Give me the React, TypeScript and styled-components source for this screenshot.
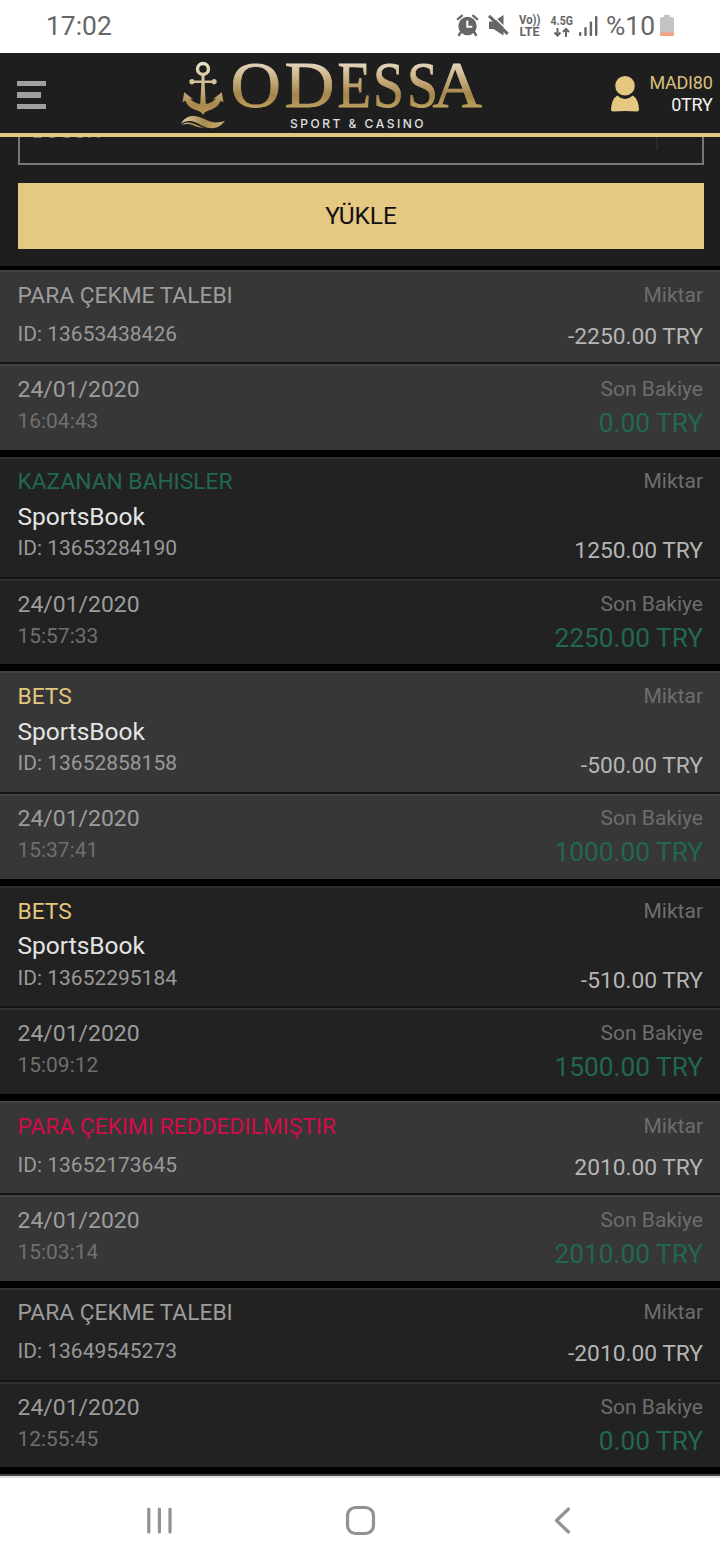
import React from "react";
import styled, { createGlobalStyle } from "styled-components";

const GlobalStyle = createGlobalStyle`
  * { box-sizing: border-box; }
  body { margin: 0; background: #000; font-family: Roboto, "Liberation Sans", sans-serif; }
`;

const Screen = styled.div`
  width: 720px;
  height: 1560px;
  display: flex;
  flex-direction: column;
  overflow: hidden;
  background: #000;
`;

const StatusBar = styled.div`
  height: 53px;
  flex: none;
  display: flex;
  justify-content: space-between;
  align-items: center;
  padding: 0 44px 0 46px;
  background: #fff;
  color: #666;
`;

const Clock = styled.span`
  margin-bottom: 2px;
  font-size: 26.4px;
  line-height: 32px;
`;

const StatusIcons = styled.svg`
  display: block;
  width: 222px;
  height: 53px;
`;

const Header = styled.header`
  position: relative;
  z-index: 1;
  height: 84px;
  flex: none;
  display: flex;
  align-items: flex-start;
  padding: 0 7.5px 0 17px;
  background: #1e1e1e;
  border-bottom: 4px solid #e2c77f;
`;

const MenuButton = styled.button`
  display: flex;
  flex-direction: column;
  gap: 6px;
  width: 29px;
  margin: 28px 0 0;
  padding: 0;
  border: 0;
  background: none;
`;

const MenuBar = styled.span<{ $short?: boolean }>`
  width: ${(p) => (p.$short ? 24 : 29)}px;
  height: 5.4px;
  background: #a0a0a0;
`;

const Logo = styled.svg`
  display: block;
  width: 308px;
  height: 80px;
  margin-left: 132px;
  overflow: visible;
`;

const Account = styled.div`
  display: flex;
  gap: 9px;
  margin-left: auto;
  padding-top: 19px;
`;

const Avatar = styled.svg`
  display: block;
  width: 30px;
  height: 38px;
  margin-top: 3px;
`;

const AccountText = styled.div`
  text-align: right;
  font-size: 18px;
  line-height: 22px;
  letter-spacing: -0.25px;
`;

const UserName = styled.div`
  color: #d9bf7c;
`;

const Credit = styled.div`
  color: #f2f2f2;
`;

const FilterPanel = styled.div`
  height: 129px;
  flex: none;
  padding: 0 16px 0 18px;
  background: #1e1e1e;
`;

const SelectBox = styled.div`
  height: 66px;
  margin-top: -38px;
  display: flex;
  align-items: center;
  justify-content: space-between;
  padding: 0 44px 3px 12px;
  border: 2px solid #777;
  color: #777;
  font-size: 21px;
`;

const SelectDivider = styled.span`
  width: 2px;
  height: 38px;
  background: #2b2b2b;
`;

const LoadButton = styled.button`
  display: block;
  width: 686px;
  height: 66px;
  margin-top: 18px;
  padding: 0;
  border: 0;
  background: #e5c881;
  color: #111;
  font: 24.4px/66px Roboto, sans-serif;
`;

const RecordList = styled.div`
  flex: none;
  display: flex;
  flex-direction: column;
  gap: 7px;
  padding-top: 4px;
`;

const Record = styled.article`
  display: flex;
  flex-direction: column;
`;

const Section = styled.div<{ $light: boolean; $height: number }>`
  height: ${(p) => p.$height}px;
  display: flex;
  justify-content: space-between;
  padding: 10px 17px 0 17.5px;
  background: ${(p) => (p.$light ? "#373737" : "#222")};
  border-top: 2px solid ${(p) => (p.$light ? "#434343" : "#2f2f2f")};
`;

const Divider = styled.div`
  height: 2px;
  background: #151515;
`;

const RightColumn = styled.div`
  display: flex;
  flex-direction: column;
  align-items: flex-end;
`;

const tones = { muted: "#9c9c9c", green: "#22684f", gold: "#e2c67e", red: "#d30c49" };
type Tone = keyof typeof tones;

const Title = styled.div<{ $tone: Tone }>`
  padding-top: 0.6px;
  margin-bottom: -0.6px;
  color: ${(p) => tones[p.$tone]};
  font-size: 22.75px;
  line-height: 26px;
`;

const Product = styled.div`
  margin: 6.3px 0 -10.5px;
  color: #e4e4e4;
  font-size: 24.5px;
  line-height: 32px;
`;

const RecordId = styled.div`
  margin-top: 12.8px;
  color: #999;
  font-size: 20.99px;
  line-height: 26px;
`;

const DateText = styled.div`
  padding-top: 0.6px;
  color: #9c9c9c;
  font-size: 22.95px;
  line-height: 26px;
`;

const TimeText = styled.div`
  margin-top: 5.2px;
  color: #6f6f6f;
  font-size: 20.95px;
  line-height: 26px;
`;

const Label = styled.div`
  margin-top: -0.22px;
  color: #6d6d6d;
  font-size: 21px;
  line-height: 26px;
`;

const Amount = styled.div`
  margin: auto 0 12.55px;
  color: #b5b5b5;
  font-size: 22.75px;
  line-height: 26px;
`;

const Balance = styled.div`
  margin-top: 6.02px;
  color: #22684f;
  font-size: 26.25px;
  line-height: 30px;
`;

const NextRecordEdge = styled.div`
  height: 2px;
  background: #434343;
`;

const NavBar = styled.nav`
  flex: 1;
  border-top: 2px solid #dedede;
  background: #fff;
  display: flex;
  justify-content: space-between;
  align-items: flex-start;
  padding: 22px 140px 0;
`;

const NavIcon = styled.svg`
  display: block;
  width: 40px;
  height: 40px;
  fill: none;
  stroke: #929292;
  stroke-width: 3.2;
  stroke-linecap: round;
  stroke-linejoin: round;
`;

type RecordData = {
  title: string;
  tone: Tone;
  product?: string;
  id: string;
  amount: string;
  date: string;
  time: string;
  balance: string;
  footHeight: number;
};

const records: RecordData[] = [
  { title: "PARA ÇEKME TALEBI", tone: "muted", id: "13653438426", amount: "-2250.00", date: "24/01/2020", time: "16:04:43", balance: "0.00", footHeight: 85.27 },
  { title: "KAZANAN BAHISLER", tone: "green", product: "SportsBook", id: "13653284190", amount: "1250.00", date: "24/01/2020", time: "15:57:33", balance: "2250.00", footHeight: 85.37 },
  { title: "BETS", tone: "gold", product: "SportsBook", id: "13652858158", amount: "-500.00", date: "24/01/2020", time: "15:37:41", balance: "1000.00", footHeight: 85.37 },
  { title: "BETS", tone: "gold", product: "SportsBook", id: "13652295184", amount: "-510.00", date: "24/01/2020", time: "15:09:12", balance: "1500.00", footHeight: 85.7 },
  { title: "PARA ÇEKIMI REDDEDILMIŞTIR", tone: "red", id: "13652173645", amount: "2010.00", date: "24/01/2020", time: "15:03:14", balance: "2010.00", footHeight: 85.27 },
  { title: "PARA ÇEKME TALEBI", tone: "muted", id: "13649545273", amount: "-2010.00", date: "24/01/2020", time: "12:55:45", balance: "0.00", footHeight: 84.93 },
];

const letters: [string, number, number][] = [
  ["O", 230.5, 50.5],
  ["D", 284.5, 50],
  ["E", 337.5, 33.5],
  ["S", 373, 31],
  ["S", 407, 31],
  ["A", 432.5, 49.5],
];

function OdessaLogo() {
  return (
    <Logo viewBox="178 53 308 80">
      <defs>
        <linearGradient id="gold" gradientUnits="userSpaceOnUse" x1="0" y1="62" x2="0" y2="108">
          <stop offset="0" stopColor="#e8d9c4" />
          <stop offset="0.35" stopColor="#cbb183" />
          <stop offset="0.72" stopColor="#a5854a" />
          <stop offset="1" stopColor="#bda060" />
        </linearGradient>
        <linearGradient id="anchor" gradientUnits="userSpaceOnUse" x1="0" y1="62" x2="0" y2="115">
          <stop offset="0" stopColor="#eadfca" />
          <stop offset="0.4" stopColor="#d3bc93" />
          <stop offset="0.8" stopColor="#a98a4e" />
          <stop offset="1" stopColor="#b5964f" />
        </linearGradient>
        <linearGradient id="wave" x1="0" y1="0" x2="1" y2="0">
          <stop offset="0" stopColor="#e0cfae" />
          <stop offset="0.5" stopColor="#a98b50" />
          <stop offset="1" stopColor="#c9ad72" />
        </linearGradient>
      </defs>
      <g fill="url(#anchor)">
        <path fillRule="evenodd" d="M203 61.8a7.2 7.2 0 1 0 0 14.4a7.2 7.2 0 1 0 0-14.4ZM203 65.2a3.8 3.8 0 1 1 0 7.6a3.8 3.8 0 1 1 0-7.6Z" />
        <path d="M201.5 75.5H204.5V80.4H211.7A2.7 2.7 0 1 1 211.7 83H204.6L205.8 104C210.5 103 214.2 101 216 98.4L212.5 99.5L221.8 92.2L223.5 102.3L220.5 100.8C218.5 107 213 109 207.5 111C205.2 111.9 204 113 203 115C202 113 200.8 111.9 198.5 111C193 109 187.5 107 185.5 100.8L182.5 102.3L184.2 92.2L193.5 99.5L190 98.4C191.8 101 195.5 103 200.2 104L201.4 83H194.3A2.7 2.7 0 1 1 194.3 80.4H201.5Z" />
      </g>
      <path fill="url(#wave)" d="M181 123.5C184 118.5 188 116 193.5 116C202 116 207 122.2 215 122.4C219 122.4 222 121.8 225 121C221 126 217 128.2 211.5 128.2C203 128.2 197 120.6 189.5 120.9C186 121.1 183.5 122 181 123.5Z" />
      <path fill="url(#wave)" d="M181.5 124.8C185 122.2 189 121.8 193 123.2C197 124.6 200 127 204 127.5C198 128 195 125.5 191 124.4C187.5 123.5 184.5 123.9 181.5 124.8Z" />
      {letters.map(([letter, x, width], i) => (
        <text
          key={i}
          x={x}
          y="107"
          fontFamily="'Liberation Serif', serif"
          fontSize="66"
          textLength={width}
          lengthAdjust="spacingAndGlyphs"
          fill="url(#gold)"
          stroke="url(#gold)"
          strokeWidth="0.8"
        >
          {letter}
        </text>
      ))}
      <text x="290" y="128" fontFamily="Inter, sans-serif" fontWeight="500" fontSize="12" textLength="133.5" fill="#e0e0e0">
        SPORT &amp; CASINO
      </text>
    </Logo>
  );
}

function StatusGlyphs() {
  return (
    <StatusIcons viewBox="454 0 222 53">
      <g fill="#666">
        <circle cx="467.5" cy="26" r="9.2" />
        <path d="M461 32l-2 3M474 32l2 3" stroke="#666" strokeWidth="2.4" strokeLinecap="round" />
        <path d="M457.8 19.2l4.2-3.6M477.2 19.2l-4.2-3.6" stroke="#666" strokeWidth="2.2" strokeLinecap="round" />
        <path d="M467.3 20.5v6.300h5" fill="none" stroke="#fff" strokeWidth="2" />
        <path d="M489 21.500h4.500l10-6.500v20.500l-10-6.500h-4.500Z" />
        <path d="M490.500 13.500l19.500 19" stroke="#fff" strokeWidth="1.600" />
        <path d="M489 15.800l18.700 18" stroke="#666" strokeWidth="3" />
        <g fontFamily="Roboto, sans-serif" fontWeight="700">
          <text x="519" y="24" fontSize="12" textLength="21.5" lengthAdjust="spacingAndGlyphs">Vo))</text>
          <text x="519.5" y="36" fontSize="12.5" textLength="20" lengthAdjust="spacingAndGlyphs">LTE</text>
          <text x="550.5" y="25.3" fontSize="12.5" textLength="22.5" lengthAdjust="spacingAndGlyphs">4.5G</text>
        </g>
        <path d="M557.5 28v7M554.5 32.500l3 3l3-3M566 37v-7M563 32l3-3l3 3" fill="none" stroke="#666" strokeWidth="2" />
        <rect x="579" y="32" width="2.4" height="4" rx="1" />
        <rect x="584.3" y="27" width="2.4" height="9" rx="1" />
        <rect x="589.7" y="21.5" width="2.4" height="14.5" rx="1" />
        <rect x="595" y="16" width="2.4" height="20" rx="1" />
        <text x="606" y="35.3" fontFamily="Roboto, sans-serif" fontSize="26.4" textLength="49">%10</text>
      </g>
      <path d="M660 19q0-2 2-2h2v-2h6v2h2q2 0 2 2v14h-14Z" fill="#c4c4c4" />
      <path d="M660 32.500h14v2q0 1.500-1.500 1.500h-11q-1.500 0-1.500-1.500Z" fill="#f4a183" />
    </StatusIcons>
  );
}

function TransactionRecord({ record, light }: { record: RecordData; light: boolean }) {
  return (
    <Record>
      <Section $light={light} $height={record.product ? 120.3 : 92.4}>
        <div>
          <Title $tone={record.tone}>{record.title}</Title>
          {record.product && <Product>{record.product}</Product>}
          <RecordId>ID: {record.id}</RecordId>
        </div>
        <RightColumn>
          <Label>Miktar</Label>
          <Amount>{record.amount} TRY</Amount>
        </RightColumn>
      </Section>
      <Divider />
      <Section $light={light} $height={record.footHeight}>
        <div>
          <DateText>{record.date}</DateText>
          <TimeText>{record.time}</TimeText>
        </div>
        <RightColumn>
          <Label>Son Bakiye</Label>
          <Balance>{record.balance} TRY</Balance>
        </RightColumn>
      </Section>
    </Record>
  );
}

export default function App() {
  return (
    <Screen>
      <GlobalStyle />
      <StatusBar>
        <Clock>17:02</Clock>
        <StatusGlyphs />
      </StatusBar>
      <Header>
        <MenuButton aria-label="Menu">
          <MenuBar />
          <MenuBar $short />
          <MenuBar />
        </MenuButton>
        <OdessaLogo />
        <Account>
          <Avatar viewBox="0 0 30 38" fill="#e5c77f">
            <circle cx="15" cy="10.8" r="9.8" />
            <path d="M7.2 20.5Q15 27.5 22.8 20.5Q28.5 24 29 34.5Q29 36.5 27 36.5Q15 35.5 3 36.5Q1 36.5 1 34.5Q1.5 24 7.2 20.5Z" />
          </Avatar>
          <AccountText>
            <UserName>MADI80</UserName>
            <Credit>0TRY</Credit>
          </AccountText>
        </Account>
      </Header>
      <FilterPanel>
        <SelectBox>
          <span>BUGÜN</span>
          <SelectDivider />
        </SelectBox>
        <LoadButton>YÜKLE</LoadButton>
      </FilterPanel>
      <RecordList>
        {records.map((record, i) => (
          <TransactionRecord key={record.id} record={record} light={i % 2 === 0} />
        ))}
        <NextRecordEdge />
      </RecordList>
      <NavBar>
        <NavIcon viewBox="0 0 40 40">
          <path d="M8.8 9v23M19.4 9v23M30 9v23" />
        </NavIcon>
        <NavIcon viewBox="0 0 40 40">
          <rect x="7.5" y="7.5" width="26" height="26" rx="8" />
        </NavIcon>
        <NavIcon viewBox="0 0 40 40">
          <path d="M28.5 9L16.5 20.5L28.5 32" />
        </NavIcon>
      </NavBar>
    </Screen>
  );
}
